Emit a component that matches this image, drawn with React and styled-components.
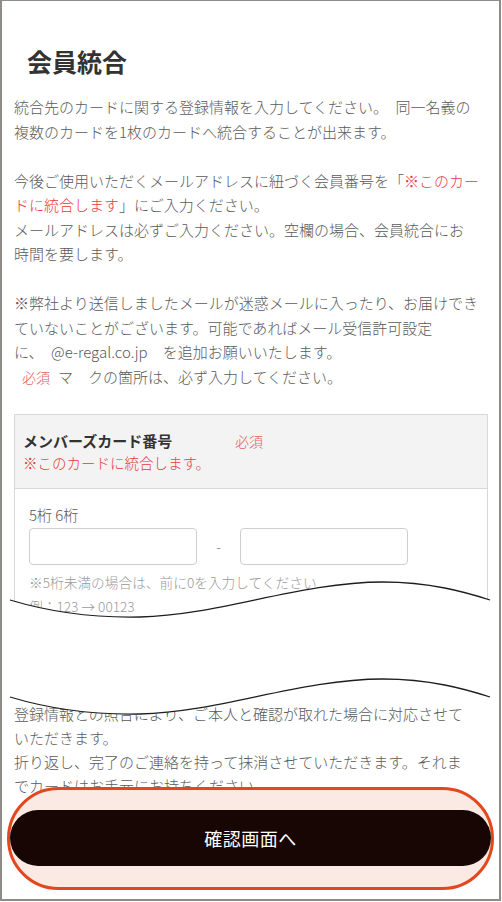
import styled, { createGlobalStyle } from "styled-components";

const GlobalStyle = createGlobalStyle`
  body {
    margin: 0;
    background: #fff;
    font-family: "Noto Sans CJK JP", "Noto Sans", sans-serif;
  }
`;

const Frame = styled.div`
  position: relative;
  box-sizing: border-box;
  width: 501px;
  height: 901px;
  border: 2px solid #8f8b89;
  border-top-width: 1px;
  overflow: hidden;
  background: #fff;
`;

const Page = styled.div`
  padding: 42px 11px 0 12px;
  color: #5a5a5a;
  font-weight: 300;
`;

const Title = styled.h1`
  margin: 0 0 16px;
  padding-left: 13px;
  font-size: 25px;
  line-height: 36px;
  font-weight: 700;
  color: #333;
`;

const Paragraph = styled.p`
  margin: 0 0 ${(p) => (p.$last ? 0 : "24.5px")};
  font-size: 15px;
  line-height: 24.5px;
  white-space: nowrap;
`;

const Red = styled.span`
  color: #e8383d;
`;

const Required = styled.span`
  display: inline-block;
  margin: 0 ${(p) => p.$space ?? 8}px;
  font-size: 14px;
  color: #e06464;
`;

const FormBox = styled.section`
  margin-top: 24.5px;
  border: 1px solid #d8d8d8;
`;

const FormHeader = styled.div`
  padding: 15px 8px 14px;
  background: #f3f3f3;
  border-bottom: 1px solid #d8d8d8;
`;

const HeaderRow = styled.div`
  display: flex;
  align-items: center;
  line-height: 22px;
`;

const FieldLabel = styled.span`
  width: 212px;
  font-size: 15px;
  font-weight: 700;
  color: #333;
`;

const HeaderNote = styled.div`
  font-size: 14.5px;
  line-height: 22px;
  color: #e8383d;
`;

const FormBody = styled.div`
  padding: 16px 14px 22px;
`;

const DigitsLabel = styled.div`
  font-size: 15px;
  line-height: 20px;
  color: #555;
`;

const InputRow = styled.div`
  display: flex;
  align-items: center;
  margin-top: 3px;
`;

const TextInput = styled.input`
  box-sizing: border-box;
  width: 168px;
  height: 37px;
  border: 1px solid #cfcfcf;
  border-radius: 4px;
  background: #fff;
`;

const Dash = styled.span`
  width: 43px;
  text-align: center;
  font-size: 14px;
  color: #777;
`;

const Hint = styled.div`
  margin-top: ${(p) => (p.$first ? "5px" : 0)};
  font-size: 13.7px;
  line-height: 24px;
  color: #9a9a9a;
`;

const LowerText = styled.p`
  margin: 61px 0 0;
  font-size: 15px;
  line-height: 24.3px;
  white-space: nowrap;
`;

const Tear = styled.svg`
  position: absolute;
  top: -1px;
  left: -2px;
  width: 502px;
  height: 902px;
  pointer-events: none;
`;

const Highlight = styled.div`
  position: absolute;
  left: 5px;
  right: 5px;
  bottom: 9px;
  padding: 20px 0 21px;
  border: 3px solid #e2481d;
  border-radius: 52px;
  background: #fbe9e4;
`;

const SubmitButton = styled.button`
  display: block;
  width: 100%;
  height: 56px;
  border: none;
  border-radius: 28px;
  background: #180604;
  color: #fff;
  font-family: inherit;
  font-size: 18px;
  letter-spacing: 0.5px;
  cursor: pointer;
`;

const topWave =
  "M10 600 C50 612 95 618 140 617 C220 615 300 582 383 582 C430 582 465 592 490 600";
const bottomWave =
  "M10 697 C50 709 95 715 140 714 C220 712 300 679 383 679 C430 679 465 689 490 697";
const bandFill =
  topWave +
  " L490 697 C465 689 430 679 383 679 C300 679 220 712 140 714 C95 715 50 709 10 697 Z";

export default function App() {
  return (
    <>
      <GlobalStyle />
      <Frame>
        <Page>
          <Title>会員統合</Title>
          <Paragraph>
            統合先のカードに関する登録情報を入力してください。　同一名義の
            <br />
            複数のカードを1枚のカードへ統合することが出来ます。
          </Paragraph>
          <Paragraph>
            今後ご使用いただくメールアドレスに紐づく会員番号を「<Red>※このカー</Red>
            <br />
            <Red>ドに統合します</Red>」にご入力ください。
            <br />
            メールアドレスは必ずご入力ください。空欄の場合、会員統合にお
            <br />
            時間を要します。
          </Paragraph>
          <Paragraph $last>
            ※弊社より送信しましたメールが迷惑メールに入ったり、お届けでき
            <br />
            ていないことがございます。可能であればメール受信許可設定
            <br />
            に、　@e-regal.co.jp　を追加お願いいたします。
            <br />
            <Required>必須</Required>マ　クの箇所は、必ず入力してください。
          </Paragraph>

          <FormBox>
            <FormHeader>
              <HeaderRow>
                <FieldLabel>メンバーズカード番号</FieldLabel>
                <Required $space={0}>必須</Required>
              </HeaderRow>
              <HeaderNote>※このカードに統合します。</HeaderNote>
            </FormHeader>
            <FormBody>
              <DigitsLabel>5桁 6桁</DigitsLabel>
              <InputRow>
                <TextInput type="text" />
                <Dash>-</Dash>
                <TextInput type="text" />
              </InputRow>
              <Hint $first>※5桁未満の場合は、前に0を入力してください</Hint>
              <Hint>例：123 → 00123</Hint>
            </FormBody>
          </FormBox>

          <LowerText>
            登録情報との照合により、ご本人と確認が取れた場合に対応させて
            <br />
            いただきます。
            <br />
            折り返し、完了のご連絡を持って抹消させていただきます。それま
            <br />
            でカードはお手元にお持ちください。
          </LowerText>
        </Page>

        <Tear viewBox="0 0 502 902">
          <path d={bandFill} fill="#fff" />
          <path d={topWave} fill="none" stroke="#1e1e1e" strokeWidth="1.3" />
          <path d={bottomWave} fill="none" stroke="#1e1e1e" strokeWidth="1.3" />
        </Tear>

        <Highlight>
          <SubmitButton type="button">確認画面へ</SubmitButton>
        </Highlight>
      </Frame>
    </>
  );
}
